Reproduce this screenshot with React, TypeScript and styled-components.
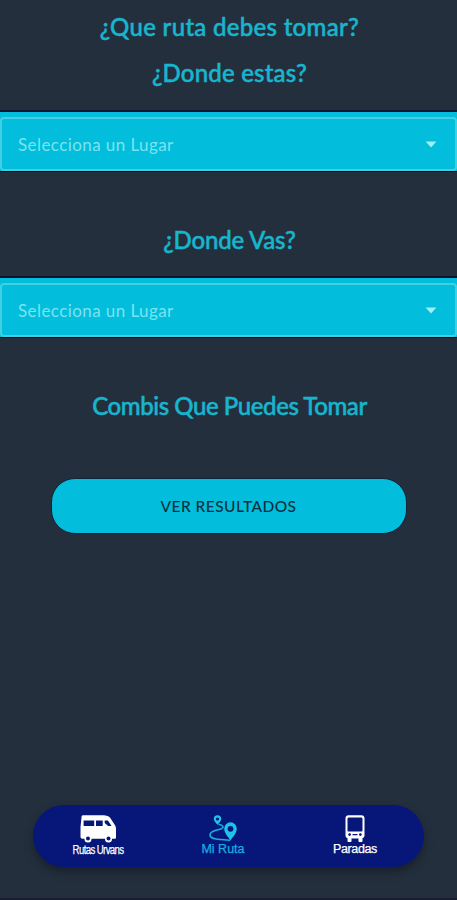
import React from "react";
import styled, { createGlobalStyle } from "styled-components";

const GlobalStyle = createGlobalStyle`
  * { box-sizing: border-box; }
  body { margin: 0; background: #242f3d; }
`;

const Screen = styled.main`
  width: 457px;
  height: 900px;
  display: flex;
  flex-direction: column;
  background: #242f3d;
  border-bottom: 2px solid #181e35;
  overflow: hidden;
  font-family: Lato, "Open Sans", sans-serif;
`;

const Heading = styled.h1<{ $top: number; $spacing: number }>`
  margin: ${(p) => p.$top}px 0 0;
  height: 30px;
  line-height: 30px;
  font-size: 24px;
  font-weight: 500;
  letter-spacing: ${(p) => p.$spacing}px;
  text-align: center;
  text-indent: 2px;
  white-space: nowrap;
  color: #18b5ce;
  -webkit-text-stroke: 0.5px #18b5ce;
`;

const SelectBand = styled.div<{ $top: number }>`
  flex: none;
  height: 62px;
  margin-top: ${(p) => p.$top}px;
  padding-top: 5px;
  background: #02bddb;
  border-top: 2px solid #0d1330;
  border-bottom: 1px solid #070d18;
`;

const SelectField = styled.button`
  width: 100%;
  height: 54px;
  display: flex;
  align-items: center;
  justify-content: space-between;
  padding: 0 18px 0 16px;
  background: transparent;
  border: 2px solid #43cfe2;
  border-radius: 4px;
  color: #7be3f0;
  font-family: inherit;
  font-size: 17px;
  letter-spacing: 0.42px;
`;

const Action = styled.button`
  flex: none;
  align-self: center;
  width: 356px;
  height: 56px;
  margin-top: 57px;
  border: 1px solid #0f2337;
  border-radius: 24px;
  background: #02bddb;
  color: #06313f;
  font-family: inherit;
  font-size: 15.5px;
  font-weight: 500;
  letter-spacing: 0.45px;
`;

const TabBar = styled.nav`
  flex: none;
  display: grid;
  grid-template-columns: 60px 60px 60px;
  justify-content: start;
  column-gap: 68px;
  width: 391px;
  height: 62px;
  margin: auto 0 31px 33px;
  padding: 9px 0 0 35px;
  border-radius: 31px;
  background: #071779;
  box-shadow: 0 5px 9px rgba(12, 20, 30, 0.5);
`;

const Tab = styled.a<{ $active?: boolean }>`
  display: flex;
  flex-direction: column;
  align-items: center;
  color: ${(p) => (p.$active ? "#17aee0" : "#ffffff")};

  svg { display: block; flex: none; }

  &:nth-child(2) { margin: 0 3px 0 -3px; }
  &:nth-child(3) { margin: 0 -1px 0 1px; }
`;

const TabLabel = styled.span<{ $spacing?: number; $stretch?: number }>`
  height: 15px;
  line-height: 15px;
  font-family: "Liberation Sans", Arial, sans-serif;
  font-size: 12.5px;
  letter-spacing: ${(p) => p.$spacing ?? 0}px;
  white-space: nowrap;
  transform: scaleX(${(p) => p.$stretch ?? 1});
  -webkit-text-stroke: 0.25px currentColor;
`;

const Arrow = () => (
  <svg width="12" height="7" viewBox="0 0 12 7">
    <path d="M.6.6h10.8L6 6.4z" fill="#a0eff7" />
  </svg>
);

const VanIcon = () => (
  <svg width="38" height="29" viewBox="0 0 38 29">
    <path
      fill="currentColor"
      fillRule="evenodd"
      d="M4 1.300h20.500c3 0 5.300.8 7 3l4 6.300c1 1.300 1.500 2.600 1.500 4.400v8.200c0 1-.6 1.500-1.500 1.500H3.500c-1.400 0-2-.7-2-2V13L2.500 3.400C2.600 2 2.800 1.300 4 1.300zM4.600 6.500v5.500h10.600V6.500zm12.400 0v5.500h6.700V6.500zm8.700 0v2.500l3.500 3h3.300L29.600 7.400c-.4-.7-.8-.9-1.500-.9z"
    />
    <circle cx="9" cy="25" r="3.500" fill="currentColor" />
    <circle cx="29.500" cy="25" r="3.500" fill="currentColor" />
    <circle cx="9" cy="24.500" r="2" fill="#071779" />
    <circle cx="29.500" cy="24.500" r="2" fill="#071779" />
  </svg>
);

const RouteIcon = () => (
  <svg width="30" height="28" viewBox="0 0 30 28">
    <path
      d="M11 10.500c4 .3 5.500 3 2.300 4.300C9.700 16.200 2 16.500 2 20.800c0 4.300 6.500 4.400 11 4.700l8.500.7"
      fill="none" stroke="currentColor" strokeWidth="1.600" strokeLinecap="round"
    />
    <path fill="#1dc3e8" fillRule="evenodd"
      d="M9.500 1.200a3.700 3.700 0 0 1 3.700 3.700c0 2.200-2.200 3.900-3.700 5.900C8 8.800 5.800 7.100 5.800 4.900a3.700 3.700 0 0 1 3.700-3.700zm0 2.200a1.600 1.600 0 1 0 0 3.200 1.600 1.600 0 0 0 0-3.200z" />
    <path fill="#1dc3e8" fillRule="evenodd"
      d="M22.500 8.300a6.300 6.300 0 0 1 6.300 6.300c0 4.300-3.300 7.700-6.300 11.900-3-4.200-6.300-7.600-6.300-11.900a6.300 6.300 0 0 1 6.300-6.300zm0 3.600a2.900 2.900 0 1 0 0 5.800 2.900 2.900 0 0 0 0-5.800z" />
  </svg>
);

const BusIcon = () => (
  <svg width="22" height="28" viewBox="0 0 22 28">
    <path fill="currentColor" fillRule="evenodd"
      d="M4.500 1.300h13c1.800 0 3 1.200 3 3v17c0 1.600-.8 2.500-2 2.800V27c0 .6-.4 1-1 1h-2c-.6 0-1-.4-1-1v-2.500h-7V27c0 .6-.4 1-1 1h-2c-.6 0-1-.4-1-1v-2.900c-1.200-.3-2-1.200-2-2.800v-17c0-1.800 1.200-3 3-3zM5 3.500c-1 0-1.500.5-1.500 1.500v11.500c0 .7.400 1 1 1h13c.6 0 1-.3 1-1V5c0-1-.5-1.500-1.500-1.500zm.6 15.700a1.400 1.400 0 1 0 0 2.800 1.400 1.400 0 0 0 0-2.800zm10.800 0a1.400 1.400 0 1 0 0 2.800 1.400 1.400 0 0 0 0-2.800zM8.500 20v1.200h5V20z" />
  </svg>
);

function PlaceSelect({ top }: { top: number }) {
  return (
    <SelectBand $top={top}>
      <SelectField type="button">
        Selecciona un Lugar
        <Arrow />
      </SelectField>
    </SelectBand>
  );
}

export default function App() {
  return (
    <>
      <GlobalStyle />
      <Screen>
        <Heading $top={12} $spacing={0.3}>¿Que ruta debes tomar?</Heading>
        <Heading as="h2" $top={16} $spacing={0.2}>¿Donde estas?</Heading>
        <PlaceSelect top={22} />
        <Heading as="h2" $top={53} $spacing={-0.2}>¿Donde Vas?</Heading>
        <PlaceSelect top={21} />
        <Heading as="h2" $top={53} $spacing={-0.43}>Combis Que Puedes Tomar</Heading>
        <Action type="button">VER RESULTADOS</Action>
        <TabBar>
          <Tab>
            <VanIcon />
            <TabLabel $spacing={-0.8} $stretch={0.77}>Rutas Urvans</TabLabel>
          </Tab>
          <Tab $active>
            <RouteIcon />
            <TabLabel>Mi Ruta</TabLabel>
          </Tab>
          <Tab>
            <BusIcon />
            <TabLabel $spacing={-0.4}>Paradas</TabLabel>
          </Tab>
        </TabBar>
      </Screen>
    </>
  );
}
